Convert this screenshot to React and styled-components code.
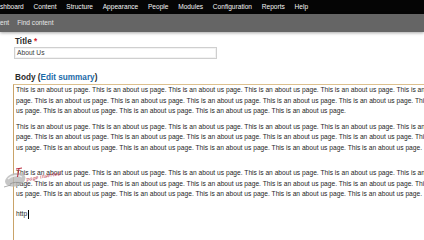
import React from "react";
import styled, { createGlobalStyle } from "styled-components";

const GlobalStyle = createGlobalStyle`
  html, body {
    margin: 0;
    padding: 0;
    background: #fff;
    overflow: hidden;
  }
  body {
    width: 424px;
    height: 240px;
    font-family: "Liberation Sans", Arial, sans-serif;
  }
`;

const menu = [
  "Dashboard",
  "Content",
  "Structure",
  "Appearance",
  "People",
  "Modules",
  "Configuration",
  "Reports",
  "Help",
];

const shortcuts = ["Add content", "Find content"];

const sentence = "This is an about us page.";
const paragraphs = [
  { count: 16, gap: 5.25 },
  { count: 17, gap: 14.8 },
  { count: 17, gap: 9.5 },
];

const App = () => {
  return (
    <>
      <GlobalStyle />
      <Toolbar>
        <MenuList>
          {menu.map((item) => (
            <MenuItem key={item}>{item}</MenuItem>
          ))}
        </MenuList>
      </Toolbar>
      <Shortcuts>
        <ShortcutList>
          {shortcuts.map((item) => (
            <ShortcutItem key={item}>{item}</ShortcutItem>
          ))}
        </ShortcutList>
      </Shortcuts>
      <Form>
        <Label>
          Title <Required>*</Required>
        </Label>
        <TextInput>About Us</TextInput>
        <Label $spaced>
          Body (<SummaryLink>Edit summary</SummaryLink>)
        </Label>
        <Editor>
          {paragraphs.map((p, i) => (
            <Paragraph key={i} $gap={p.gap}>
              {Array(p.count).fill(sentence).join(" ")}
            </Paragraph>
          ))}
          <Paragraph $gap={0}>
            http
            <Caret />
          </Paragraph>
          {/* screen-capture pen annotation */}
          <PenMark>
            <svg width="50" height="26" viewBox="0 0 50 26">
              <path
                d="M1 16 C3 9, 13 6, 19 9 C23 11, 22 17, 16 20 C10 23, 1 22, 1 16 Z"
                fill="#b8b8b8"
                opacity="0.8"
              />
              <path
                d="M4 14 C8 10, 14 10, 18 12"
                stroke="#f0f0f0"
                strokeWidth="1.3"
                fill="none"
              />
              <path
                d="M6 19 C9 17, 14 17, 17 18"
                stroke="#8a8a8a"
                strokeWidth="0.7"
                fill="none"
              />
              <path d="M0 22 L7 20" stroke="#999" strokeWidth="0.8" />
              <path
                d="M12 4 L18 3 M15 3.5 L13.5 12"
                stroke="#b8283a"
                strokeWidth="1"
                fill="none"
              />
            </svg>
            <PenNote>page inserted</PenNote>
          </PenMark>
        </Editor>
      </Form>
    </>
  );
};

export default App;

const Toolbar = styled.div`
  height: 14px;
  background: #050505;
  overflow: hidden;
  display: flex;
  align-items: center;
`;

const MenuList = styled.div`
  display: flex;
  gap: 9.7px;
  margin-left: -8.5px;
  white-space: nowrap;
`;

const MenuItem = styled.span`
  font-size: 6.6px;
  line-height: 14px;
  color: #f4f4f4;
`;

const Shortcuts = styled.div`
  height: 18px;
  background: #656565;
  overflow: hidden;
  display: flex;
  align-items: center;
  box-shadow: 0 1px 3px rgba(0, 0, 0, 0.35);
  position: relative;
`;

const ShortcutList = styled.div`
  display: flex;
  gap: 8px;
  margin-left: -26px;
  white-space: nowrap;
`;

const ShortcutItem = styled.span`
  font-size: 6.6px;
  line-height: 18px;
  color: #e6e6e6;
`;

const Form = styled.div`
  padding: 5px 0 0 14px;
  display: flex;
  flex-direction: column;
  align-items: flex-start;
`;

const Label = styled.div`
  font-size: 8.2px;
  font-weight: bold;
  line-height: 10px;
  color: #2a2a2a;
  padding-left: 1px;
  margin-top: ${(p) => (p.$spaced ? "14px" : "0")};
  white-space: nowrap;
`;

const Required = styled.span`
  color: #d0202a;
`;

const SummaryLink = styled.span`
  color: #1a6aa8;
`;

const TextInput = styled.div`
  box-sizing: border-box;
  width: 203px;
  height: 12px;
  border: 1px solid #cfcfcf;
  box-shadow: inset 0 0 0 1px #f3f3f3;
  padding-left: 2px;
  font-size: 6.7px;
  line-height: 10px;
  color: #3a3a3a;
`;

const Editor = styled.div`
  position: relative;
  margin: 1px 0 0 -1px;
  width: 452px;
  height: 155px;
  padding-left: 2px;
  border-top: 1px solid #dcc08e;
  border-left: 1px solid #c9a369;
  background: #fff;
`;

const Paragraph = styled.p`
  margin: 0 0 ${(p) => p.$gap}px 0;
  font-size: 6.67px;
  line-height: 10.5px;
  color: #262626;
`;

const Caret = styled.span`
  display: inline-block;
  width: 1px;
  height: 9px;
  background: #000;
  vertical-align: middle;
  margin-left: 0.5px;
`;

const PenMark = styled.div`
  position: absolute;
  left: -10px;
  top: 80px;
  width: 50px;
  height: 26px;
  pointer-events: none;
`;

const PenNote = styled.span`
  position: absolute;
  left: 22px;
  top: 8px;
  font-family: "DejaVu Serif", serif;
  font-style: italic;
  font-size: 5px;
  color: #b8283a;
  transform: rotate(-10deg);
  white-space: nowrap;
`;
